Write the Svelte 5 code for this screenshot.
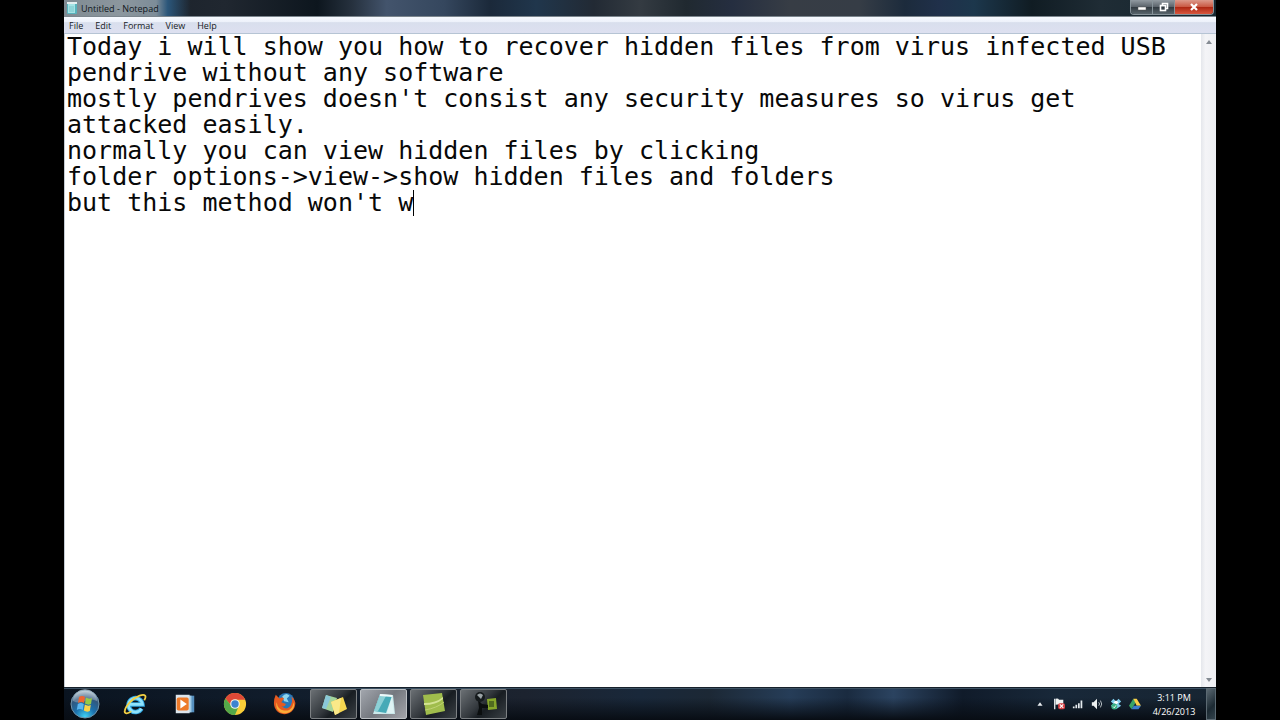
<script lang="ts">
  const menus = ['File', 'Edit', 'Format', 'View', 'Help'];

  let text = $state(
    [
      'Today i will show you how to recover hidden files from virus infected USB pendrive without any software',
      "mostly pendrives doesn't consist any security measures so virus get attacked easily.",
      'normally you can view hidden files by clicking',
      'folder options->view->show hidden files and folders',
      "but this method won't w"
    ].join('\n')
  );

  // Columns that fit before the editor wraps to the next row
  const columns = 74;

  function wrappedRows(value: string) {
    const rows: string[] = [];
    for (const line of value.split('\n')) {
      let row = '';
      for (const word of line.split(' ')) {
        const next = row ? row + ' ' + word : word;
        if (next.length > columns && row) {
          rows.push(row);
          row = word;
        } else {
          row = next;
        }
      }
      rows.push(row);
    }
    return rows;
  }

  let rows = $derived(wrappedRows(text));
  let caretRow = $derived(rows.length - 1);
  let caretColumn = $derived(rows[rows.length - 1].length);
</script>

<div class="screen">
  <main class="window">
    <header class="titlebar">
      <svg class="app-icon" viewBox="0 0 12 14" aria-hidden="true">
        <rect x="1" y="2" width="10" height="11" rx="1" fill="#58b3bd" />
        <rect x="2" y="3" width="7" height="9" fill="#a5e3e5" />
        <path d="M1 1h10v2H1z" fill="#e4eef0" />
        <path d="M3 6h5M3 8h5M3 10h5" stroke="#79c7cd" />
      </svg>
      <h1>Untitled - Notepad</h1>
      <div class="controls">
        <button type="button" aria-label="Minimize">
          <svg viewBox="0 0 12 12"><rect x="2" y="6" width="8" height="3" fill="#fff" stroke="#555" stroke-width=".5" /></svg>
        </button>
        <button type="button" aria-label="Restore">
          <svg viewBox="0 0 12 12" fill="none" stroke="#fff" stroke-width="1.6">
            <path d="M4.500 4V2.500h5v5H8" />
            <rect x="2.500" y="4.500" width="5" height="5" />
          </svg>
        </button>
        <button type="button" class="close" aria-label="Close">
          <svg viewBox="0 0 12 12"><path d="M3 3l6 6M9 3l-6 6" stroke="#fff" stroke-width="2.200" /></svg>
        </button>
      </div>
    </header>

    <nav class="menubar">
      {#each menus as menu}
        <button type="button">{menu}</button>
      {/each}
    </nav>

    <section class="editor">
      <div class="page">
        <textarea bind:value={text} aria-label="Document text" spellcheck="false"></textarea>
        <span class="caret" style="--row: {caretRow}; --column: {caretColumn}"></span>
      </div>
      <div class="scrollbar">
        <button type="button" aria-label="Scroll up">
          <svg viewBox="0 0 6 4"><path d="M3 0l3 4H0z" fill="#858b93" /></svg>
        </button>
        <button type="button" aria-label="Scroll down">
          <svg viewBox="0 0 6 4"><path d="M0 0h6L3 4z" fill="#858b93" /></svg>
        </button>
      </div>
    </section>

    <footer class="taskbar">
      <button type="button" class="start" aria-label="Start">
        <svg viewBox="0 0 30 30">
          <defs>
            <radialGradient id="orb" cx=".5" cy=".95" r=".9">
              <stop offset="0" stop-color="#3fd2f5" />
              <stop offset=".4" stop-color="#1c70ac" />
              <stop offset=".75" stop-color="#31577c" />
              <stop offset="1" stop-color="#a6bac8" />
            </radialGradient>
          </defs>
          <circle cx="15" cy="15" r="14" fill="url(#orb)" stroke="#6f93aa" />
          <path d="M3 12a12 12 0 0 1 24 0q-6-3-12 0t-12 0z" fill="#fff" opacity=".25" />
          <path d="M9 8q3-2 6 0l-1 6q-3-2-6 0z" fill="#ef6632" />
          <path d="M16 8.500q3 2 6 .5l-1 6q-3 1.500-6-.5z" fill="#98ca45" />
          <path d="M7.800 15q3-2 6 0l-1 6q-3-2-6 0z" fill="#5bb7ef" />
          <path d="M14.800 15.500q3 2 6 .5l-1 6q-3 1.500-6-.5z" fill="#fbd348" />
        </svg>
      </button>

      <button type="button" class="launcher" aria-label="Internet Explorer">
        <svg viewBox="0 0 26 26">
          <path d="M20 18a7.500 7.500 0 1 1 1-4.500H7" fill="none" stroke="#2fa5e0" stroke-width="5" />
          <path d="M20 18a7.500 7.500 0 1 1 1-4.500H7" fill="none" stroke="#8fe2fb" stroke-width="3" />
          <path d="M23 9c3-5 1-7-5-5C10 7 3 15 2 20c-1 4 3 4 7 1" fill="none" stroke="#f2d044" stroke-width="2" />
        </svg>
      </button>
      <button type="button" class="launcher" aria-label="Windows Media Player">
        <svg viewBox="0 0 26 26">
          <path d="M10 4h13v18H10z" fill="#5690bf" />
          <path d="M8 4h12v18H8z" fill="#a1cbe5" />
          <path d="M3 3h15v20H3z" fill="#dce5ec" />
          <rect x="4" y="6" width="13" height="14" rx="2" fill="#ed7a29" />
          <path d="M8 8l7 5-7 5z" fill="#fff" />
        </svg>
      </button>
      <button type="button" class="launcher" aria-label="Google Chrome">
        <svg viewBox="0 0 26 26">
          <circle cx="13" cy="13" r="12" fill="#f9ce38" />
          <path d="M2.600 7A12 12 0 0 1 24 8.500H13L9 15z" fill="#df4937" />
          <path d="M2.600 7A12 12 0 0 0 13 25l4-9.500-8-.5z" fill="#54a849" />
          <circle cx="13" cy="13" r="5.200" fill="#f4f5ec" />
          <circle cx="13" cy="13" r="4" fill="#3d83d0" />
        </svg>
      </button>
      <button type="button" class="launcher" aria-label="Firefox">
        <svg viewBox="0 0 26 26">
          <circle cx="14" cy="10" r="9" fill="#2877b7" />
          <path d="M10 5q4-5 8-1l-3 3 2 4-5-1z" fill="#8ed5ee" />
          <path d="M3 3l4 4q3-2 5 0l-3 4 5 2q-1 4-5 2 5 5 9 1 4-4 2-11 5 4 4 9c-1 6-6 10-12 10S1 19 1 12q0-5 2-9z" fill="#e65b20" />
          <path d="M4 11q1 8 8 9c7 1 10-4 10-9 3 5-2 12-9 12S2 17 4 11z" fill="#f9ac38" />
        </svg>
      </button>

      <div class="tasks">
        <button type="button" class="task" aria-label="Sticky Notes">
          <svg viewBox="0 0 30 24">
            <path d="M7 3l11 3-4 14-11-4z" fill="#a4d49b" />
            <path d="M7 3l5 2-5 12-4-1z" fill="#8ac8d8" />
            <path d="M12 10l12-5 4 12-12 6z" fill="#f5d650" />
            <path d="M12 10l4 13 4-2 2-15z" fill="#fae989" />
          </svg>
        </button>
        <button type="button" class="task active" aria-label="Untitled - Notepad">
          <svg viewBox="0 0 30 24">
            <path d="M11 2l13 1 2 19H4z" fill="#cbe9eb" />
            <path d="M11 3l12 1-6 17-12-2z" fill="#47aab7" />
            <path d="M11 3l6 1-8 15-4 0z" fill="#8dd0d6" />
            <path d="M11 3l12 1" stroke="#eef9fa" stroke-width="2" />
            <path d="M23 5l2 16h-7z" fill="#dff3f4" />
          </svg>
        </button>
        <button type="button" class="task" aria-label="Screen recorder">
          <svg viewBox="0 0 30 24">
            <path d="M4 3l19-2 3 18-19 4z" fill="#a0bd4c" />
            <path d="M5 11q12 0 19-6v2Q17 13 5 13z" fill="#d3e394" />
            <path d="M6 18q12-2 19-8" fill="none" stroke="#bfd374" />
          </svg>
        </button>
        <button type="button" class="task" aria-label="Webcam">
          <svg viewBox="0 0 30 24">
            <path d="M18 7l9-1 1 11-9 1z" fill="#86a62b" />
            <path d="M20 9h5v6h-5z" fill="#516b20" />
            <path d="M9 8l4 4 6 1v3h-6v7H8l2-7z" fill="#0b0e0f" />
            <circle cx="11" cy="5" r="5" fill="#151a1c" />
            <path d="M8 3q3-3 6 0l-2 4z" fill="#9aa2a5" />
          </svg>
        </button>
      </div>

      <div class="tray">
        <button type="button" aria-label="Show hidden icons">
          <svg viewBox="0 0 14 14"><path d="M7 5l3 4H4z" fill="#e9edf0" /></svg>
        </button>
        <button type="button" aria-label="Action Center">
          <svg viewBox="0 0 14 14">
            <path d="M2 1v12" stroke="#e9edf0" stroke-width="1.500" />
            <path d="M3 1q3-1 4 1h5v6H8Q6 7 3 8z" fill="#f1f3f3" />
            <rect x="6" y="6" width="8" height="7" rx="2" fill="#d43e42" />
            <path d="M8 7.500l4 4m0-4l-4 4" stroke="#fff" stroke-width="1.300" />
          </svg>
        </button>
        <button type="button" aria-label="Network">
          <svg viewBox="0 0 14 14" fill="#e5ebee"><path d="M1 10h2v2H1zM4 8h2v4H4zM7 6h2v6H7zM10 3h2v9h-2z" /></svg>
        </button>
        <button type="button" aria-label="Volume">
          <svg viewBox="0 0 14 14">
            <path d="M1 5h2l4-4v12L3 9H1z" fill="#eef1f2" />
            <path d="M9 5q2 2 0 4M11 3q3 4 0 8" fill="none" stroke="#cfd6d9" />
          </svg>
        </button>
        <button type="button" aria-label="Dropbox">
          <svg viewBox="0 0 14 14">
            <path d="M1 4l3-3 3 3 3-3 3 3-3 3 3 2-6 4-6-4 3-2z" fill="#80cfed" />
            <path d="M4 5l3-2 3 2-3 3z" fill="#fff" />
            <circle cx="5" cy="10" r="3.500" fill="#39af81" />
            <path d="M3.500 10l1.500 1.500L7 8.500" fill="none" stroke="#fff" />
          </svg>
        </button>
        <button type="button" aria-label="Google Drive">
          <svg viewBox="0 0 14 14">
            <path d="M5 1L0 9l3 4 5-8z" fill="#39a465" />
            <path d="M5 1h4l5 8h-5z" fill="#f8cf49" />
            <path d="M5.500 9H14l-3 4H3z" fill="#3b7dcc" />
          </svg>
        </button>
      </div>

      <div class="clock">
        <time>3:11 PM</time>
        <time datetime="2013-04-26">4/26/2013</time>
      </div>
      <button type="button" class="show-desktop" aria-label="Show desktop"></button>
    </footer>
  </main>
</div>

<style>
  :global(body) {
    margin: 0;
    background: #000;
  }

  .screen {
    box-sizing: border-box;
    height: 100vh;
    padding: 0 5%;
    font-family: 'Open Sans', 'Noto Sans', sans-serif;
  }

  .window {
    display: flex;
    flex-direction: column;
    height: 100%;
  }

  button {
    display: flex;
    align-items: center;
    justify-content: center;
    margin: 0;
    padding: 0;
    border: 0;
    background: none;
    font: inherit;
    color: inherit;
  }

  svg {
    display: block;
  }

  .titlebar {
    display: flex;
    flex: none;
    box-sizing: border-box;
    height: 17px;
    padding: 0 2px;
    border-bottom: 1px solid #7c868e;
    background:
      linear-gradient(90deg, #7f8a92 0, #8c979e 5%, #7d8c98 8%, #2b567a 9%, transparent 11%),
      linear-gradient(90deg, #171e25 0, #202730 14%, #0d161e 22%, #26313e 25%, #43546c 28%, #35475e 33%, #1b293a 37%, #20364c 41%, #222a34 46%, #343b42 50%, #202930 54%, #252e40 58%, #373d45 63%, #363d46 69%, #1c2b3c 73%, #20304a 76%, #1c374c 79%, #101c23 84%, #1f2c35 90%, #14252e 100%);
  }

  .app-icon {
    width: 12px;
    height: 14px;
    margin: 1px 3px 0 0;
  }

  h1 {
    margin: 0;
    font-size: 9px;
    font-weight: 400;
    line-height: 17px;
    color: #10171c;
  }

  .controls {
    display: flex;
    height: 14px;
    margin-left: auto;
    border: 1px solid #87939a;
    border-top: 0;
    border-radius: 0 0 4px 4px;
    overflow: hidden;
  }

  .controls button {
    width: 22px;
    border-right: 1px solid #87939a;
    background: linear-gradient(#929aa1, #596169 50%, #30383f 50%, #59656c);
  }

  .controls .close {
    width: 38px;
    border-right: 0;
    background: linear-gradient(#dc998b, #c95741 50%, #ac2511 50%, #d9573e);
  }

  .controls svg {
    width: 12px;
    height: 12px;
  }

  .menubar {
    display: flex;
    flex: none;
    box-sizing: border-box;
    gap: 12px;
    height: 17px;
    padding: 0 5px;
    border-bottom: 1px solid #b6c4d4;
    background: linear-gradient(#f7faff, #edf1fa 30%, #d9dfed 35%, #dde0f0);
    font-size: 9px;
    color: #171b25;
  }

  .editor {
    display: flex;
    flex: 1;
    min-height: 0;
    border-left: 1px solid #c5ccd4;
    background: #fff;
  }

  .page {
    position: relative;
    flex: 1;
    font: 25px/26px 'DejaVu Sans Mono', 'Liberation Mono', monospace;
  }

  textarea {
    display: block;
    box-sizing: border-box;
    width: 100%;
    height: 100%;
    padding: 0 2px;
    border: 0;
    outline: 0;
    background: none;
    resize: none;
    overflow: hidden;
    font: inherit;
    color: #080808;
  }

  .caret {
    position: absolute;
    top: calc(var(--row) * 26px);
    left: calc(2px + var(--column) * 1ch);
    width: 1px;
    height: 26px;
    background: #000;
  }

  .scrollbar {
    display: flex;
    flex-direction: column;
    justify-content: space-between;
    width: 15px;
    background: linear-gradient(90deg, #e5e7ec, #f4f4f7 30%, #eeeff3);
  }

  .scrollbar button {
    height: 15px;
  }

  .scrollbar svg {
    width: 6px;
    height: 4px;
  }

  .taskbar {
    display: flex;
    flex: none;
    box-sizing: border-box;
    height: 33px;
    border-top: 1px solid #17212b;
    box-shadow: inset 0 1px #3c5163;
    background:
      linear-gradient(180deg, transparent 30%, #080d14 100%),
      linear-gradient(90deg, #0a1420 0, #111d2c 20%, #1c232f 40%, #19283a 50%, #1c2835 56%, #263d58 63%, #1a2b40 68%, #2b4360 72%, #101b2a 78%, #182839 86%, #172532 100%);
    color: #fff;
  }

  .start {
    width: 42px;
    margin-right: 4px;
  }

  .start svg {
    width: 30px;
    height: 30px;
  }

  .launcher {
    width: 50px;
  }

  .launcher svg {
    width: 24px;
    height: 24px;
  }

  .tasks {
    display: flex;
    gap: 3px;
    padding-top: 1px;
  }

  .task {
    box-sizing: border-box;
    width: 47px;
    height: 30px;
    border: 1px solid #7c8083;
    border-radius: 2px;
    background: linear-gradient(135deg, #6b7074, #33383d 45%, #181d22 60%, #3a4045);
  }

  .task.active {
    border-color: #bcc0c4;
    background: linear-gradient(135deg, #a2a6ad, #74787f 50%, #a2a4aa);
  }

  .task svg {
    width: 30px;
    height: 24px;
  }

  .tray {
    display: flex;
    gap: 5px;
    margin-left: auto;
  }

  .tray svg {
    width: 14px;
    height: 12px;
  }

  .clock {
    display: flex;
    flex-direction: column;
    align-items: center;
    width: 64px;
    padding-top: 3px;
    font-size: 9px;
    line-height: 14px;
  }

  .show-desktop {
    width: 10px;
    border: 1px solid #5b6972;
    background: linear-gradient(135deg, #5a6871, #1c2a33 60%, #33434c);
  }
</style>
